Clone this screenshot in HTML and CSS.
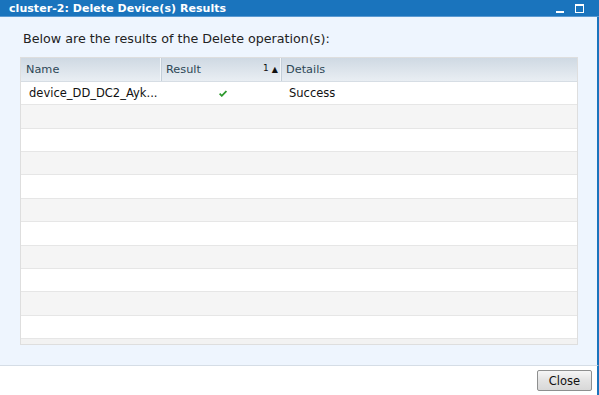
FILE: index.html
```html
<!DOCTYPE html>
<html lang="en">
<head>
  <meta charset="UTF-8">
  <title>cluster-2: Delete Device(s) Results</title>
  <link rel="stylesheet" href="styles.css">
</head>
<body>
  <div class="window">
    <div class="titlebar">
      <span class="title">cluster-2: Delete Device(s) Results</span>
      <span class="win-btns">
        <span class="btn-min"></span>
        <span class="btn-max"></span>
      </span>
    </div>
    <div class="content">
      <p class="intro">Below are the results of the Delete operation(s):</p>
      <div class="grid">
        <div class="grid-head">
          <div class="col col-name">Name</div>
          <div class="col col-result">Result <span class="sort"><span class="sort-num">1</span>&#9650;</span></div>
          <div class="col col-details">Details</div>
        </div>
        <div class="grid-row">
          <div class="cell cell-name">device_DD_DC2_Ayk...</div>
          <div class="cell cell-result">
            <svg class="check" viewBox="0 0 8 7"><path d="M0.6 3.6 L2.8 5.8 L7.4 1" fill="none" stroke="#2e9a2e" stroke-width="1.8"/></svg>
          </div>
          <div class="cell cell-details">Success</div>
        </div>
        <div class="grid-row"></div>
        <div class="grid-row"></div>
        <div class="grid-row"></div>
        <div class="grid-row"></div>
        <div class="grid-row"></div>
        <div class="grid-row"></div>
        <div class="grid-row"></div>
        <div class="grid-row"></div>
        <div class="grid-row"></div>
        <div class="grid-row"></div>
        <div class="grid-foot"></div>
      </div>
    </div>
    <div class="footer">
      <button class="close-btn">Close</button>
    </div>
  </div>
</body>
</html>
```

FILE: styles.css
```css
body {
  margin: 0;
  font-family: Verdana, 'DejaVu Sans', sans-serif;
  background: #fff;
}
.window {
  width: 599px;
  height: 395px;
  display: flex;
  flex-direction: column;
}
.titlebar {
  height: 16px;
  background: #1a74bd;
  border-bottom: 1px solid #5b9ad2;
  display: flex;
  align-items: center;
  justify-content: space-between;
  padding: 0 0 0 9px;
}
.title {
  color: #fff;
  font-weight: bold;
  font-size: 11px;
  letter-spacing: 0.05px;
}
.win-btns {
  display: flex;
  align-items: flex-start;
  gap: 11px;
  margin-right: 15px;
  height: 12px;
}
.btn-min {
  width: 8px;
  height: 2px;
  background: #fff;
  margin-top: 9px;
}
.btn-max {
  width: 7px;
  height: 6px;
  border: 1px solid #fff;
  border-top-width: 2px;
  margin-top: 2px;
}
.content {
  flex: 1;
  background: #eef5fe;
  border-right: 2px solid #1a74bd;
  padding: 0 19px 0 20px;
  border-bottom: 1px solid #d5dde6;
}
.intro {
  margin: 15px 0 0 3px;
  font-size: 12.7px;
  line-height: 14px;
  color: #222;
}
.grid {
  margin-top: 11px;
  border: 1px solid #dedede;
  background: #fff;
}
.grid-head {
  display: grid;
  grid-template-columns: 141px 120px 1fr;
  height: 23px;
  background: linear-gradient(to bottom, #cfd9e3 0%, #e9eef3 100%);
  border-bottom: 1px solid #d6dde4;
}
.col {
  font-size: 11.3px;
  color: #2d4756;
  display: flex;
  align-items: center;
  padding-left: 5px;
  border-right: 1px solid #c4cfd9;
  box-shadow: inset -1px 0 0 #f3f6f9;
}
.col-result {
  padding-left: 4px;
  justify-content: space-between;
  padding-right: 3px;
}
.col-details {
  border-right: none;
  box-shadow: none;
  padding-left: 4px;
}
.sort {
  display: flex;
  align-items: center;
  gap: 3px;
  font-size: 8px;
  color: #111;
  margin-top: -1px;
}
.sort-num {
  font-size: 9px;
  margin-top: -3px;
}
.grid-row {
  display: grid;
  grid-template-columns: 141px 120px 1fr;
  height: 23.36px;
  box-sizing: border-box;
  border-bottom: 1px solid #e6e6e6;
  background: #fff;
}
.grid-row:nth-child(odd) {
  background: #f5f5f5;
}
.cell {
  font-size: 11.5px;
  color: #111;
  display: flex;
  align-items: center;
}
.cell-name {
  padding-left: 8px;
}
.cell-result {
  justify-content: center;
  padding-left: 1px;
}
.cell-details {
  padding-left: 7px;
}
.check {
  width: 8px;
  height: 7px;
}
.grid-foot {
  height: 5px;
  background: #f2f2f2;
}
.footer {
  height: 29px;
  display: flex;
  justify-content: flex-end;
  align-items: center;
  padding-right: 5px;
  border-right: 2px solid #1a74bd;
}
.close-btn {
  width: 55px;
  height: 21px;
  font-family: Verdana, 'DejaVu Sans', sans-serif;
  font-size: 11.5px;
  color: #111;
  border: 1px solid #8e8f8f;
  border-radius: 2px;
  background: linear-gradient(to bottom, #f6f6f6 0%, #e3e3e3 50%, #d8d8d8 100%);
  padding: 0;
}
```
